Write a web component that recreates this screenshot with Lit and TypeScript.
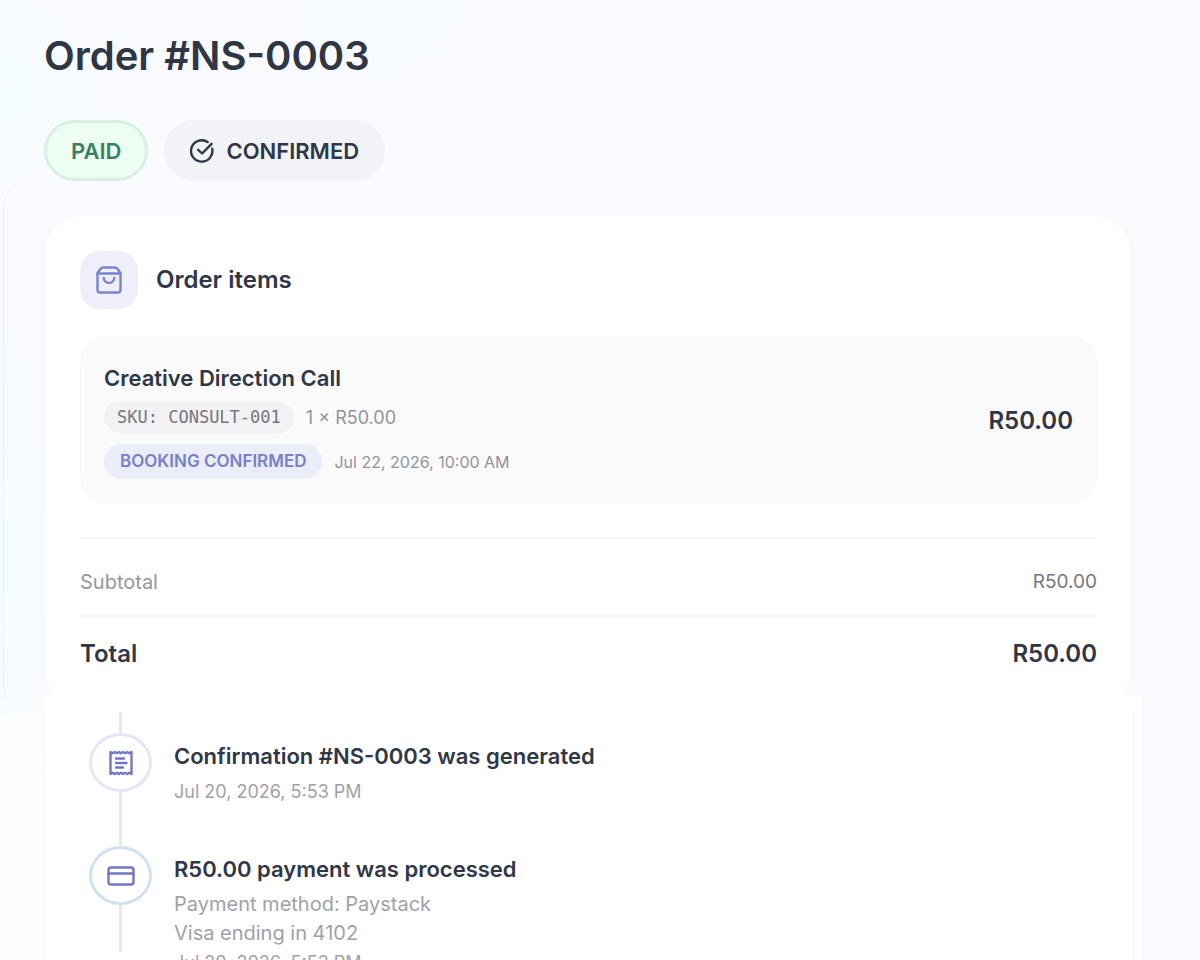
import { LitElement, html, css, svg } from "lit";
import { customElement } from "lit/decorators.js";
import { classMap } from "lit/directives/class-map.js";

interface TimelineEvent {
  title: string;
  details: string[];
  date: string;
  icon: "receipt" | "card";
}

const order = {
  number: "#NS-0003",
  item: {
    name: "Creative Direction Call",
    sku: "CONSULT-001",
    quantity: "1 × R50.00",
    booking: "Jul 22, 2026, 10:00 AM",
    price: "R50.00",
  },
  subtotal: "R50.00",
  total: "R50.00",
};

const events: TimelineEvent[] = [
  { title: "Confirmation #NS-0003 was generated", details: [], date: "Jul 20, 2026, 5:53 PM", icon: "receipt" },
  {
    title: "R50.00 payment was processed",
    details: ["Payment method: Paystack", "Visa ending in 4102"],
    date: "Jul 20, 2026, 5:53 PM",
    icon: "card",
  },
];

const checkIcon = html`<svg class="check" viewBox="0 0 24 24" aria-hidden="true">
  <path d="M22.200 9.800A10.700 10.700 0 1 1 17.600 3" />
  <path d="M8.200 10.800l3.900 3.700L21.600 4.800" />
</svg>`;

const bagIcon = html`<svg class="bag" viewBox="0 0 26 28" aria-hidden="true">
  <path d="M1.500 7.200 4.600 2.700Q5.500 1.500 7 1.500H19Q20.500 1.500 21.400 2.700L24.500 7.200V24Q24.500 26.500 22 26.500H4Q1.500 26.500 1.500 24Z" />
  <path d="M1.500 7.500H24.500M7.800 12C8.300 18.500 17.700 18.500 18.200 12" />
</svg>`;

const glyphs = {
  receipt: svg`<path d="M3.500 3 5.700 4.300 7.800 3 9.900 4.300 12 3 14 4.300 16.100 3 18.200 4.300 20.300 3 22.400 4.300 24.500 3V25L22.400 23.700 20.300 25 18.200 23.700 16.100 25 14 23.700 12 25 9.900 23.700 7.800 25 5.700 23.700 3.500 25Z" /><path d="M9 9.500H17M9 14H19.500M9 18.500H16" />`,
  card: svg`<rect x="1.500" y="5.500" width="25" height="17" rx="2.500" /><path d="M1.500 11.500H26.500" />`,
};

@customElement("app-root")
export class AppRoot extends LitElement {
  static styles = css`
    :host {
      display: block;
      height: 100vh;
      overflow: hidden;
      color: #2f3747;
      font-family: Inter, "Liberation Sans", sans-serif;
      background:
        radial-gradient(circle at 0 90px, #f3fcff 0, transparent 110px),
        radial-gradient(circle at 380px 0, #f5fbff 0, transparent 110px),
        radial-gradient(ellipse 50px 300px at 0 560px, #f4fcff 0, transparent 100%),
        radial-gradient(ellipse 420px 300px at 960px 60px, #faf9fe 0, transparent 100%),
        #f9fafe;
    }
    h1, h2, h3, p, dl, dd, ol { margin: 0; padding: 0; }
    svg { fill: none; stroke: currentColor; stroke-width: 2.4; stroke-linecap: round; stroke-linejoin: round; }
    .summary { padding: 32px 68px 0 44px; }
    h1 { font-size: 40px; line-height: 48px; font-weight: 600; }
    .badges { display: flex; gap: 16px; margin-top: 40px; }
    .badge {
      display: flex; align-items: center; gap: 12px; box-sizing: border-box; height: 61px;
      padding: 0 26px; border-radius: 31px; background: #f2f3f7;
      font-size: 22px; font-weight: 600; line-height: 28px;
    }
    .badge.paid { padding: 0 24px; border: 3px solid #d6f0e1; background: #edfdf3; color: #3a815f; }
    .check { width: 24px; height: 24px; }

    .panel { position: relative; margin-top: 34px; }
    .panel::before {
      content: ""; position: absolute; left: -41px; top: -37px; bottom: -8px; width: 30px;
      border-left: 1px solid #eff2f8; border-radius: 36px 0 0 36px;
    }
    .card {
      position: relative; box-sizing: border-box; padding: 35px 34px 32px 35px;
      border: 1px solid #f4f4f9; border-radius: 36px; background: #fff;
    }
    .heading { display: flex; align-items: center; gap: 18px; }
    .tile { display: grid; place-items: center; width: 58px; height: 58px; border-radius: 20px; background: #eeeffb; color: #7b83cf; }
    .bag { width: 26px; height: 28px; }
    h2 { font-size: 24px; line-height: 32px; font-weight: 600; }
    .item {
      display: flex; align-items: center; justify-content: space-between; margin-top: 28px;
      padding: 23px; border: 1px solid #f6f6f7; border-radius: 26px; background: #fafafb;
    }
    h3 { font-size: 22px; line-height: 34px; font-weight: 600; }
    .meta { display: flex; align-items: center; gap: 12px; margin-top: 6px; color: #92949c; }
    .meta + .meta { margin-top: 11px; }
    .sku {
      padding: 0 13px; border-radius: 16px; background: #f2f2f4; color: #747780;
      font: 17px/32px "DejaVu Sans Mono", monospace;
    }
    .quantity { font-size: 18px; }
    .booked { padding: 0 16px; border-radius: 18px; background: #ebedf8; color: #7880cb; font-size: 17px; line-height: 35px; font-weight: 600; }
    .when { font-size: 16px; }
    .price { font-size: 24px; font-weight: 600; }
    .totals { margin-top: 34px; }
    .row { display: flex; justify-content: space-between; border-top: 2px solid #f8f8f9; line-height: 40px; }
    .row.sub { padding: 23px 0 13px; color: #94969e; font-size: 20px; }
    .row.sub dd { color: #747780; font-size: 19px; }
    .row.total { padding-top: 17px; font-size: 24px; font-weight: 600; }

    .activity {
      position: relative; margin: -11px 58px 0 0; padding: 16px 8px 0 43px;
      background:
        linear-gradient(#fff, #fff) 43px 0 no-repeat,
        linear-gradient(#f8f9fb, #f8f9fb) 3px 18px / 1px 100% no-repeat,
        linear-gradient(#fbfdff, #fefeff 80px) 0 18px no-repeat;
    }
    .timeline {
      position: relative; list-style: none; padding: 21px 45px 24px;
      border: solid #f5f5f8; border-width: 0 1px; background: #fff;
    }
    .timeline::before {
      content: ""; position: absolute; left: 75px; top: 0; bottom: 49px; width: 3px; background: #e9e9ed;
    }
    .event { position: relative; display: grid; grid-template-columns: 63px 1fr; column-gap: 22px; align-items: start; min-height: 113px; }
    .node {
      display: grid; place-items: center; box-sizing: border-box; height: 59px;
      border: 3px solid #e6e5f6; border-radius: 50%; background: #fff; color: #7475c4;
    }
    .node.card-node { border-color: #d2e0f4; }
    .node svg { width: 28px; height: 28px; }
    .event h3 { margin-top: 6px; }
    .lines { margin-top: 4px; color: #9fa1a8; line-height: 29px; }
    .detail { font-size: 20px; }
    .date { font-size: 18px; }
  `;

  render() {
    const { item } = order;
    return html`
      <main>
        <section class="summary">
          <h1>Order ${order.number}</h1>
          <div class="badges">
            <span class="badge paid">PAID</span>
            <span class="badge">${checkIcon}CONFIRMED</span>
          </div>
          <div class="panel">
            <div class="card">
              <div class="heading"><span class="tile">${bagIcon}</span><h2>Order items</h2></div>
              <article class="item">
                <div>
                  <h3>${item.name}</h3>
                  <div class="meta"><span class="sku">SKU: ${item.sku}</span><span class="quantity">${item.quantity}</span></div>
                  <div class="meta"><span class="booked">BOOKING CONFIRMED</span><time class="when">${item.booking}</time></div>
                </div>
                <span class="price">${item.price}</span>
              </article>
              <dl class="totals">
                <div class="row sub"><dt>Subtotal</dt><dd>${order.subtotal}</dd></div>
                <div class="row total"><dt>Total</dt><dd>${order.total}</dd></div>
              </dl>
            </div>
          </div>
        </section>
        <section class="activity">
          <ol class="timeline">
            ${events.map((e) => html`
              <li class="event">
                <span class=${classMap({ node: true, "card-node": e.icon === "card" })}>
                  <svg viewBox="0 0 28 28" aria-hidden="true">${glyphs[e.icon]}</svg>
                </span>
                <div>
                  <h3>${e.title}</h3>
                  <div class="lines">
                    ${e.details.map((d) => html`<p class="detail">${d}</p>`)}
                    <p class="date">${e.date}</p>
                  </div>
                </div>
              </li>`)}
          </ol>
        </section>
      </main>
    `;
  }
}
